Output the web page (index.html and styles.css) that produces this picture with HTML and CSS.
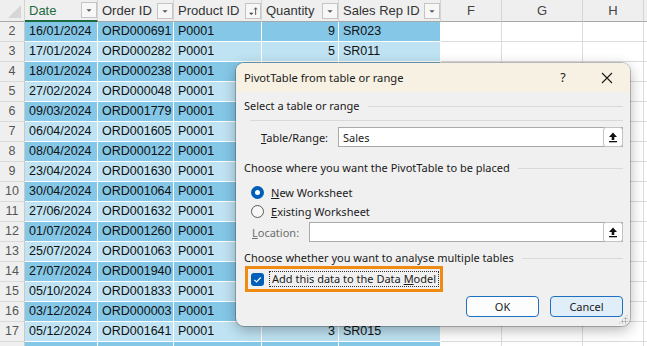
FILE: index.html
```html
<!DOCTYPE html>
<html>
<head>
<meta charset="utf-8">
<link rel="stylesheet" href="styles.css">
</head>
<body>
<div class="sheet">
  <div class="corner"><span class="tri"></span></div>
  <div class="hd sel">Date<span class="fb"><svg viewBox="0 0 16 16" width="16" height="16"><path d="M5 7h6l-3 3z" fill="#555"/></svg></span></div>
  <div class="hd">Order ID<span class="fb"><svg viewBox="0 0 16 16" width="16" height="16"><path d="M5 7h6l-3 3z" fill="#555"/></svg></span></div>
  <div class="hd">Product ID<span class="fb"><svg viewBox="0 0 16 16" width="16" height="16"><path d="M3.5 10h5l-2.5 2.5z" fill="#444"/><path d="M11 12.5V4.5M9.3 6.3L11 4.3l1.7 2" stroke="#444" stroke-width="1" fill="none"/></svg></span></div>
  <div class="hd">Quantity<span class="fb"><svg viewBox="0 0 16 16" width="16" height="16"><path d="M5 7h6l-3 3z" fill="#555"/></svg></span></div>
  <div class="hd">Sales Rep ID<span class="fb"><svg viewBox="0 0 16 16" width="16" height="16"><path d="M5 7h6l-3 3z" fill="#555"/></svg></span></div>
  <div class="hd col">F</div>
  <div class="hd col">G</div>
  <div class="hd col">H</div>
  <div class="hd col"></div>

  <div class="rn">2</div><div class="c d">16/01/2024</div><div class="c d">ORD000691</div><div class="c d">P0001</div><div class="c d num">9</div><div class="c d">SR023</div><div class="e"></div><div class="e"></div><div class="e"></div><div class="e"></div>
  <div class="rn">3</div><div class="c l">17/01/2024</div><div class="c l">ORD000282</div><div class="c l">P0001</div><div class="c l num">5</div><div class="c l">SR011</div><div class="e"></div><div class="e"></div><div class="e"></div><div class="e"></div>
  <div class="rn">4</div><div class="c d">18/01/2024</div><div class="c d">ORD000238</div><div class="c d">P0001</div><div class="c d"></div><div class="c d"></div><div class="e"></div><div class="e"></div><div class="e"></div><div class="e"></div>
  <div class="rn">5</div><div class="c l">27/02/2024</div><div class="c l">ORD000048</div><div class="c l">P0001</div><div class="c l"></div><div class="c l"></div><div class="e"></div><div class="e"></div><div class="e"></div><div class="e"></div>
  <div class="rn">6</div><div class="c d">09/03/2024</div><div class="c d">ORD001779</div><div class="c d">P0001</div><div class="c d"></div><div class="c d"></div><div class="e"></div><div class="e"></div><div class="e"></div><div class="e"></div>
  <div class="rn">7</div><div class="c l">06/04/2024</div><div class="c l">ORD001605</div><div class="c l">P0001</div><div class="c l"></div><div class="c l"></div><div class="e"></div><div class="e"></div><div class="e"></div><div class="e"></div>
  <div class="rn">8</div><div class="c d">08/04/2024</div><div class="c d">ORD000122</div><div class="c d">P0001</div><div class="c d"></div><div class="c d"></div><div class="e"></div><div class="e"></div><div class="e"></div><div class="e"></div>
  <div class="rn">9</div><div class="c l">23/04/2024</div><div class="c l">ORD001630</div><div class="c l">P0001</div><div class="c l"></div><div class="c l"></div><div class="e"></div><div class="e"></div><div class="e"></div><div class="e"></div>
  <div class="rn">10</div><div class="c d">30/04/2024</div><div class="c d">ORD001064</div><div class="c d">P0001</div><div class="c d"></div><div class="c d"></div><div class="e"></div><div class="e"></div><div class="e"></div><div class="e"></div>
  <div class="rn">11</div><div class="c l">27/06/2024</div><div class="c l">ORD001632</div><div class="c l">P0001</div><div class="c l"></div><div class="c l"></div><div class="e"></div><div class="e"></div><div class="e"></div><div class="e"></div>
  <div class="rn">12</div><div class="c d">01/07/2024</div><div class="c d">ORD001260</div><div class="c d">P0001</div><div class="c d"></div><div class="c d"></div><div class="e"></div><div class="e"></div><div class="e"></div><div class="e"></div>
  <div class="rn">13</div><div class="c l">25/07/2024</div><div class="c l">ORD001063</div><div class="c l">P0001</div><div class="c l"></div><div class="c l"></div><div class="e"></div><div class="e"></div><div class="e"></div><div class="e"></div>
  <div class="rn">14</div><div class="c d">27/07/2024</div><div class="c d">ORD001940</div><div class="c d">P0001</div><div class="c d"></div><div class="c d"></div><div class="e"></div><div class="e"></div><div class="e"></div><div class="e"></div>
  <div class="rn">15</div><div class="c l">05/10/2024</div><div class="c l">ORD001833</div><div class="c l">P0001</div><div class="c l"></div><div class="c l"></div><div class="e"></div><div class="e"></div><div class="e"></div><div class="e"></div>
  <div class="rn">16</div><div class="c d">03/12/2024</div><div class="c d">ORD000003</div><div class="c d">P0001</div><div class="c d"></div><div class="c d"></div><div class="e"></div><div class="e"></div><div class="e"></div><div class="e"></div>
  <div class="rn">17</div><div class="c l">05/12/2024</div><div class="c l">ORD001641</div><div class="c l">P0001</div><div class="c l num">3</div><div class="c l">SR015</div><div class="e"></div><div class="e"></div><div class="e"></div><div class="e"></div>
  <div class="rn"></div><div class="c d"></div><div class="c d"></div><div class="c d"></div><div class="c d"></div><div class="c d"></div><div class="e"></div><div class="e"></div><div class="e"></div><div class="e"></div>
</div>

<div class="dialog">
  <div class="titlebar">
    <span class="title">PivotTable from table or range</span>
    <span class="help">?</span>
    <span class="close"><svg viewBox="0 0 12 12" width="12" height="12"><path d="M1 1L11 11M11 1L1 11" stroke="#1a1a1a" stroke-width="1.1"/></svg></span>
  </div>
  <div class="body">
    <div class="group g1">Select a table or range</div>
    <div class="rule"></div>
    <div class="field f1">
      <span class="lbl"><u>T</u>able/Range:</span>
      <div class="input"><span class="val">Sales</span><span class="pick"><svg viewBox="0 0 12 12" width="12" height="12"><path d="M6 1.5L10 6H7.3v3H4.7V6H2z" fill="#111"/><rect x="2" y="10" width="8" height="1.3" fill="#111"/></svg></span></div>
    </div>
    <div class="group g2">Choose where you want the PivotTable to be placed</div>
    <div class="radio r1"><span class="dot on"></span><span><u>N</u>ew Worksheet</span></div>
    <div class="radio"><span class="dot"></span><span><u>E</u>xisting Worksheet</span></div>
    <div class="field f2">
      <span class="lbl dis"><u>L</u>ocation:</span>
      <div class="input"><span class="val"></span><span class="pick"><svg viewBox="0 0 12 12" width="12" height="12"><path d="M6 1.5L10 6H7.3v3H4.7V6H2z" fill="#111"/><rect x="2" y="10" width="8" height="1.3" fill="#111"/></svg></span></div>
    </div>
    <div class="group g3">Choose whether you want to analyse multiple tables</div>
    <div class="hl">
      <span class="chk"><svg viewBox="0 0 13 13" width="13" height="13"><path d="M3.3 6.8l2.2 2.1 4.2-4.4" stroke="#fff" stroke-width="1.1" fill="none"/></svg></span>
      <span class="focus">Add this data to the Data <u>M</u>odel</span>
    </div>
    <div class="buttons">
      <span class="btn">OK</span>
      <span class="btn cancel">Cancel</span>
    </div>
  </div>
  <span class="grip"></span>
</div>
</body>
</html>
```
FILE: styles.css
```css
* { box-sizing: border-box; }
html, body { margin: 0; padding: 0; }
body {
  width: 647px;
  height: 346px;
  overflow: hidden;
  background: #fff;
  position: relative;
  font-family: "Liberation Sans", Arial, sans-serif;
}
.sheet {
  display: grid;
  grid-template-columns: 25px 73px 76px 88px 77px 102px 61px 81px 61px 20px;
  grid-template-rows: 22px;
  grid-auto-rows: 20px;
  font-size: 12.5px;
  color: #111;
}
.corner {
  background: #efefef;
  border-right: 1px solid #d4d4d4;
  border-bottom: 1px solid #a8a8a8;
  position: relative;
}
.tri {
  position: absolute;
  right: 3px;
  bottom: 3px;
  width: 0;
  height: 0;
  border-left: 13px solid transparent;
  border-bottom: 13px solid #d6d6d6;
}
.hd {
  background: #efefef;
  border-right: 1px solid #d4d4d4;
  border-bottom: 1px solid #a8a8a8;
  display: flex;
  align-items: center;
  padding-left: 4px;
  font-size: 13px;
  color: #333;
  white-space: nowrap;
  overflow: hidden;
}
.hd.sel {
  color: #1e6b3f;
  border-bottom: 2px solid #1e6b3f;
}
.hd.col {
  justify-content: center;
  padding-left: 0;
  color: #444;
}
.fb {
  margin-left: auto;
  width: 16px;
  height: 16px;
  border: 1px solid #c4c4c4;
  background: #f7f7f7;
  display: flex;
  align-items: center;
  justify-content: center;
}
.fb svg { display: block; width: 14px; height: 14px; }
.rn {
  background: #efefef;
  border-right: 1px solid #c9c9c9;
  border-bottom: 1px solid #dadada;
  text-align: center;
  line-height: 19px;
  color: #555;
  font-size: 12.5px;
}
.c {
  border-right: 1px solid #fff;
  border-bottom: 1px solid #fff;
  line-height: 19px;
  padding: 0 4px;
  white-space: nowrap;
  overflow: hidden;
}
.c.d { background: #85c7e7; }
.c.l { background: #bfe3f3; }
.c.num { text-align: right; padding-right: 3px; }
.e {
  border-right: 1px solid #dcdcdc;
  border-bottom: 1px solid #dcdcdc;
}

/* dialog */
.dialog {
  position: absolute;
  left: 236px;
  top: 63px;
  width: 394px;
  height: 263px;
  border-radius: 8px;
  background: #f0f0f0;
  box-shadow: 0 0 0 1px rgba(0,0,0,0.22), 0 4px 14px rgba(0,0,0,0.3);
  overflow: hidden;
  font-family: "Noto Sans", "Open Sans", sans-serif;
  font-size: 11px;
  color: #1a1a1a;
}
.titlebar {
  height: 29px;
  background: #f6f1e3;
  display: flex;
  align-items: center;
  padding-left: 8px;
}
.title { flex: 1; font-size: 11.2px; }
.help { width: 14px; text-align: center; margin-right: 31px; font-size: 12.5px; }
.close { width: 12px; height: 12px; margin-right: 17px; display: flex; }
.close svg { display: block; }
.body { padding: 0 7px 0 8px; }
.group {
  display: flex;
  align-items: center;
  height: 16px;
  line-height: 16px;
  white-space: nowrap;
}
.group::after {
  content: "";
  flex: 1;
  border-top: 1px solid #d9d9d9;
  margin-left: 8px;
}
.g1 { margin-top: 6px; }
.g2 { margin-top: 13px; }
.g3 { margin-top: 8px; }
.rule {
  margin: 6px 0 0 6px;
  border-top: 1px solid #d9d9d9;
}
.field { display: flex; align-items: center; }
.f1 { margin-top: 6px; }
.f1 .lbl { margin-left: 17px; width: 77px; }
.f2 { margin-top: 1px; }
.f2 .lbl { margin-left: 8px; width: 57px; }
.lbl.dis { color: #6e6e6e; }
.input {
  flex: 1;
  height: 20px;
  background: #fff;
  border: 1px solid #a9a9a9;
  display: flex;
  align-items: center;
}
.val { flex: 1; padding-left: 4px; }
.pick {
  width: 20px;
  height: 20px;
  margin: -1px -1px -1px 0;
  border: 1px solid #c3c3c3;
  border-radius: 3px;
  background: #fff;
  display: flex;
  align-items: center;
  justify-content: center;
}
.pick svg { display: block; }
.radio {
  display: flex;
  align-items: center;
  height: 19px;
}
.r1 { margin-top: 7px; }
.dot {
  width: 13px;
  height: 13px;
  border-radius: 50%;
  border: 1px solid #5c5c5c;
  background: #f7f7f7;
  margin-left: 7px;
  margin-right: 7px;
}
.dot.on {
  border: 4px solid #005fb8;
  background: #fff;
}
.hl {
  margin: 0 0 0 1px;
  width: 198px;
  height: 26px;
  border: 3px solid #ef8a13;
  display: flex;
  align-items: center;
}
.chk {
  width: 13px;
  height: 13px;
  margin-left: 3px;
  border-radius: 3px;
  background: #005fb8;
  display: flex;
}
.chk svg { display: block; }
.focus {
  margin-left: 5px;
  border: 1px dotted #333;
  height: 16px;
  line-height: 14px;
  padding: 0 2px;
  white-space: nowrap;
}
.buttons {
  display: flex;
  justify-content: flex-end;
  gap: 11px;
  margin-top: 4px;
}
.btn {
  width: 73px;
  height: 21px;
  border: 1px solid #1f6fc1;
  border-radius: 4px;
  background: #fdfdfd;
  display: flex;
  align-items: center;
  justify-content: center;
}
.btn.cancel { background: #e0eef9; }
.grip {
  position: absolute;
  right: 2px;
  bottom: 2px;
  width: 10px;
  height: 10px;
  background-image: radial-gradient(circle, #9a9a9a 0.9px, transparent 1.1px);
  background-size: 3px 3px;
  clip-path: polygon(100% 0, 100% 100%, 0 100%);
}
```
